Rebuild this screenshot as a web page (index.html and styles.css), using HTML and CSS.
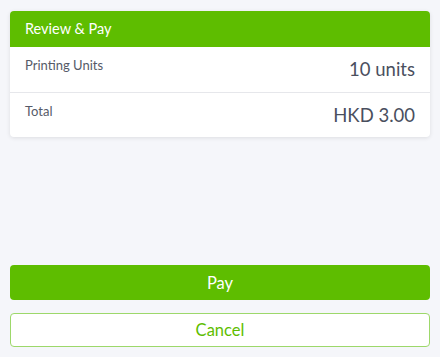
FILE: index.html
```html
<!DOCTYPE html>
<html lang="en">
<head>
    <meta charset="UTF-8">
    <meta name="viewport" content="width=device-width, initial-scale=1.0">
    <title>Review &amp; Pay</title>
    <link rel="stylesheet" href="styles.css">
</head>
<body>
    <div class="page">
        <div class="card">
            <div class="card-header">Review &amp; Pay</div>
            <div class="row">
                <span class="label">Printing Units</span>
                <span class="value">10 units</span>
            </div>
            <div class="row">
                <span class="label">Total</span>
                <span class="value">HKD 3.00</span>
            </div>
        </div>

        <div class="actions">
            <button class="pay-btn">Pay</button>
            <button class="cancel-btn">Cancel</button>
        </div>
    </div>
</body>
</html>
```

FILE: styles.css
```css
body {
    margin: 0;
    padding: 0;
    background: #f5f6fa;
    font-family: 'Lato', 'Open Sans', sans-serif;
    color: #4a4f5e;
}

.page {
    display: flex;
    flex-direction: column;
    height: 357px;
    padding: 11px 10px 10px;
    box-sizing: border-box;
}

.card {
    background: #fff;
    border-radius: 4px;
    overflow: hidden;
    box-shadow: 0 1px 4px rgba(0, 0, 0, 0.1);
}

.card-header {
    background: #5ebd00;
    color: #fff;
    font-size: 14.5px;
    height: 36px;
    line-height: 36px;
    padding: 0 15px;
}

.row {
    display: flex;
    justify-content: space-between;
    align-items: flex-start;
    height: 45px;
    padding: 0 15px;
    box-sizing: border-box;
}

.row + .row {
    border-top: 1px solid #e6e7eb;
}

.label {
    font-size: 13px;
    margin-top: 10px;
    color: #555a68;
}

.value {
    font-size: 18.5px;
    margin-top: 11px;
    color: #4a4f5e;
}

.actions {
    margin-top: auto;
    display: flex;
    flex-direction: column;
    gap: 13px;
}

button {
    font-family: inherit;
    font-size: 16.5px;
    height: 35px;
    border-radius: 4px;
    cursor: pointer;
    width: 100%;
}

.pay-btn {
    background: #5ebd00;
    color: #fff;
    border: none;
}

.cancel-btn {
    background: #fff;
    color: #5ebd00;
    border: 1px solid #9dd86a;
    height: 34px;
}
```
